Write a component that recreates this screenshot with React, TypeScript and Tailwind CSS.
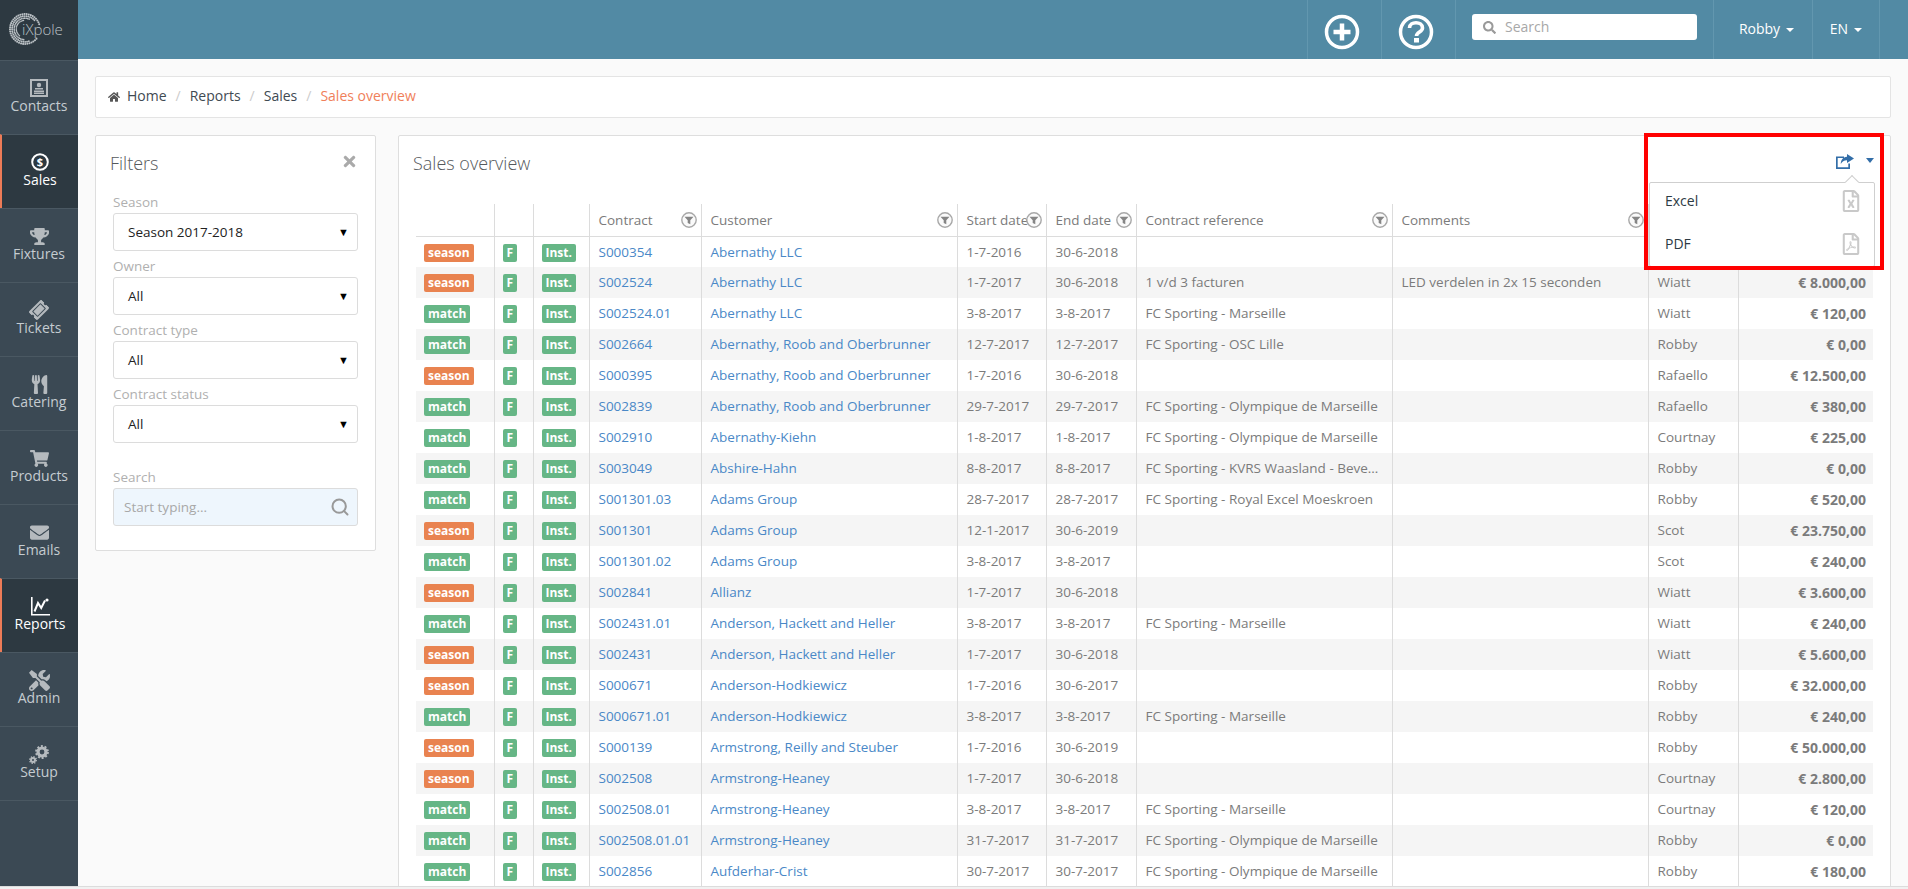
import React from 'react';
import { FaEnvelope, FaHome, FaRegFileExcel, FaRegFilePdf, FaSearch, FaShoppingCart, FaTicketAlt, FaTimes, FaTools, FaTrophy, FaUtensils } from 'react-icons/fa';
import { Search } from 'lucide-react';

type Row = {
  type: 'season' | 'match';
  contract: string;
  customer: string;
  start: string;
  end: string;
  reference?: string;
  comments?: string;
  owner: string;
  amount: string;
};

const rows: Row[] = [
  { type: 'season', contract: 'S000354', customer: 'Abernathy LLC', start: '1-7-2016', end: '30-6-2018', owner: '', amount: '' },
  { type: 'season', contract: 'S002524', customer: 'Abernathy LLC', start: '1-7-2017', end: '30-6-2018', reference: '1 v/d 3 facturen', comments: 'LED verdelen in 2x 15 seconden', owner: 'Wiatt', amount: '€ 8.000,00' },
  { type: 'match', contract: 'S002524.01', customer: 'Abernathy LLC', start: '3-8-2017', end: '3-8-2017', reference: 'FC Sporting - Marseille', owner: 'Wiatt', amount: '€ 120,00' },
  { type: 'match', contract: 'S002664', customer: 'Abernathy, Roob and Oberbrunner', start: '12-7-2017', end: '12-7-2017', reference: 'FC Sporting - OSC Lille', owner: 'Robby', amount: '€ 0,00' },
  { type: 'season', contract: 'S000395', customer: 'Abernathy, Roob and Oberbrunner', start: '1-7-2016', end: '30-6-2018', owner: 'Rafaello', amount: '€ 12.500,00' },
  { type: 'match', contract: 'S002839', customer: 'Abernathy, Roob and Oberbrunner', start: '29-7-2017', end: '29-7-2017', reference: 'FC Sporting - Olympique de Marseille', owner: 'Rafaello', amount: '€ 380,00' },
  { type: 'match', contract: 'S002910', customer: 'Abernathy-Kiehn', start: '1-8-2017', end: '1-8-2017', reference: 'FC Sporting - Olympique de Marseille', owner: 'Courtnay', amount: '€ 225,00' },
  { type: 'match', contract: 'S003049', customer: 'Abshire-Hahn', start: '8-8-2017', end: '8-8-2017', reference: 'FC Sporting - KVRS Waasland - Bever...', owner: 'Robby', amount: '€ 0,00' },
  { type: 'match', contract: 'S001301.03', customer: 'Adams Group', start: '28-7-2017', end: '28-7-2017', reference: 'FC Sporting - Royal Excel Moeskroen', owner: 'Robby', amount: '€ 520,00' },
  { type: 'season', contract: 'S001301', customer: 'Adams Group', start: '12-1-2017', end: '30-6-2019', owner: 'Scot', amount: '€ 23.750,00' },
  { type: 'match', contract: 'S001301.02', customer: 'Adams Group', start: '3-8-2017', end: '3-8-2017', owner: 'Scot', amount: '€ 240,00' },
  { type: 'season', contract: 'S002841', customer: 'Allianz', start: '1-7-2017', end: '30-6-2018', owner: 'Wiatt', amount: '€ 3.600,00' },
  { type: 'match', contract: 'S002431.01', customer: 'Anderson, Hackett and Heller', start: '3-8-2017', end: '3-8-2017', reference: 'FC Sporting - Marseille', owner: 'Wiatt', amount: '€ 240,00' },
  { type: 'season', contract: 'S002431', customer: 'Anderson, Hackett and Heller', start: '1-7-2017', end: '30-6-2018', owner: 'Wiatt', amount: '€ 5.600,00' },
  { type: 'season', contract: 'S000671', customer: 'Anderson-Hodkiewicz', start: '1-7-2016', end: '30-6-2017', owner: 'Robby', amount: '€ 32.000,00' },
  { type: 'match', contract: 'S000671.01', customer: 'Anderson-Hodkiewicz', start: '3-8-2017', end: '3-8-2017', reference: 'FC Sporting - Marseille', owner: 'Robby', amount: '€ 240,00' },
  { type: 'season', contract: 'S000139', customer: 'Armstrong, Reilly and Steuber', start: '1-7-2016', end: '30-6-2019', owner: 'Robby', amount: '€ 50.000,00' },
  { type: 'season', contract: 'S002508', customer: 'Armstrong-Heaney', start: '1-7-2017', end: '30-6-2018', owner: 'Courtnay', amount: '€ 2.800,00' },
  { type: 'match', contract: 'S002508.01', customer: 'Armstrong-Heaney', start: '3-8-2017', end: '3-8-2017', reference: 'FC Sporting - Marseille', owner: 'Courtnay', amount: '€ 120,00' },
  { type: 'match', contract: 'S002508.01.01', customer: 'Armstrong-Heaney', start: '31-7-2017', end: '31-7-2017', reference: 'FC Sporting - Olympique de Marseille', owner: 'Robby', amount: '€ 0,00' },
  { type: 'match', contract: 'S002856', customer: 'Aufderhar-Crist', start: '30-7-2017', end: '30-7-2017', reference: 'FC Sporting - Olympique de Marseille', owner: 'Robby', amount: '€ 180,00' },
];

const ContactsIcon = () => (
  <svg width="18" height="18" viewBox="0 0 18 18" fill="currentColor">
    <path fillRule="evenodd" d="M0 0h18v18H0zM2 2v14h14V2z" />
    <circle cx="9" cy="6" r="2.200" />
    <path d="M5 9h8v1.600H5zM4 11.400h10V13H4zM4 13.600h10V15H4z" />
  </svg>
);

const SalesIcon = () => (
  <svg width="18" height="18" viewBox="0 0 18 18" fill="none" stroke="currentColor">
    <circle cx="9" cy="9" r="7.800" strokeWidth="2" />
    <text x="9" y="13" textAnchor="middle" fontSize="11" fontWeight="700" fill="currentColor" stroke="none" fontFamily="'Open Sans', sans-serif">$</text>
  </svg>
);

const ChartIcon = () => (
  <svg width="19" height="19" viewBox="0 0 19 19" fill="currentColor">
    <path d="M0 0h1.600v17H19v1.600H0z" />
    <path d="M3.500 14.500 7 6l3.200 5L14 3.500" fill="none" stroke="currentColor" strokeWidth="2" />
    <circle cx="16" cy="3" r="1.600" />
  </svg>
);

// small gear lower left, big gear upper right
const SetupIcon = () => (
  <svg width="20" height="19" viewBox="0 0 20 19" fill="none" stroke="currentColor">
    <circle cx="13" cy="7" r="4" strokeWidth="3.200" />
    <circle cx="13" cy="7" r="6" strokeWidth="1.800" strokeDasharray="2 1.770" />
    <circle cx="4" cy="15" r="2" strokeWidth="2" />
    <circle cx="4" cy="15" r="3.300" strokeWidth="1.400" strokeDasharray="1.300 1.290" />
  </svg>
);

const navItems = [
  { label: 'Contacts', icon: <ContactsIcon /> },
  { label: 'Sales', icon: <SalesIcon />, active: true },
  { label: 'Fixtures', icon: <FaTrophy size={19} /> },
  { label: 'Tickets', icon: <FaTicketAlt size={18} className="-rotate-45" /> },
  { label: 'Catering', icon: <FaUtensils size={19} /> },
  { label: 'Products', icon: <FaShoppingCart size={19} /> },
  { label: 'Emails', icon: <FaEnvelope size={19} /> },
  { label: 'Reports', icon: <ChartIcon />, active: true },
  { label: 'Admin', icon: <FaTools size={21} /> },
  { label: 'Setup', icon: <SetupIcon /> },
];

const Logo = () => {
  const dots = [];
  for (let ring = 0; ring < 4; ring++) {
    for (let i = 0; i < 38; i++) {
      const a = (i / 38) * Math.PI * 1.72 + 0.7;
      const r = 15 - ring * 2.1;
      // band gets thinner towards both ends of the arc
      const edge = Math.sin((i / 38) * Math.PI);
      if (ring > edge * 4) continue;
      dots.push(
        <circle key={`${ring}-${i}`} cx={16 + Math.cos(a) * r} cy={16 + Math.sin(a) * r} r={1.05 - ring * 0.1} fill="#bcc2c6" />,
      );
    }
  }
  return (
    <svg width="58" height="34" viewBox="0 0 58 34" className="-ml-[2px]">
      {dots}
      <text x="13" y="22" fontSize="15" fill="#bcc2c6" fontFamily="'Open Sans', sans-serif" fontWeight="300">iXpole</text>
    </svg>
  );
};

const FilterIcon = () => (
  <svg width="16" height="16" viewBox="0 0 16 16" className="-ml-[6px] shrink-0">
    <circle cx="8" cy="8" r="7.200" fill="#fafafa" stroke="#a8a8a8" strokeWidth="1.400" />
    <path d="M3.500 4.800h9L9.300 8.300V12.300L6.700 11V8.300z" fill="#858585" />
  </svg>
);

const Badge = ({ color, children }: { color: string; children: React.ReactNode }) => (
  <span className={`inline-flex h-[18px] items-center justify-center rounded-[2px] px-[4px] text-[12px] font-bold leading-none text-white ${color}`}>
    {children}
  </span>
);

const FilterSelect = ({ label, value }: { label: string; value: string }) => (
  <div className="mb-[5px]">
    <div className="mb-[1px] h-[20px] text-[13.5px] leading-[20px] text-[#b0b0b0]">{label}</div>
    <div className="flex h-[38px] items-center justify-between rounded-[3px] border border-[#dcdcdc] bg-white pl-[14px] pr-[8px] text-[13.5px] text-[#222]">
      {value}
      <span className="text-[11px] text-black">▼</span>
    </div>
  </div>
);

const HeaderCell = ({ label, filter = true }: { label?: string; filter?: boolean }) => (
  <th className="h-[32px] border-l border-[#dcdcdc] pl-[9px] pr-[4px] text-left font-normal first:border-l-0">
    <div className="flex items-center justify-between whitespace-nowrap text-[13.5px] text-[#7b7b7b]">
      {label}
      {filter && label && <FilterIcon />}
    </div>
  </th>
);

export default function App() {
  return (
    <div className="relative flex h-[889px] flex-col overflow-hidden bg-[#f1f1f1] font-['Open_Sans',sans-serif] text-[14px]">
      <div className="flex h-[886px] shrink-0 overflow-hidden bg-[#fafafa]">
        <aside className="flex w-[78px] shrink-0 flex-col bg-[#3b4954]">
          <div className="flex h-[60px] shrink-0 items-center justify-center bg-[#2d3941]">
            <Logo />
          </div>
          {navItems.map((item) => (
            <div
              key={item.label}
              className={`flex h-[74px] shrink-0 flex-col items-center border-t border-[#4a5862] pt-[17px] text-[14px] leading-[20px] ${
                item.active ? 'border-l-2 border-l-[#ed7b57] bg-[#2d3941] text-white' : 'text-[#c5ccd1]'
              }`}
            >
              <div className={`flex h-[20px] items-center ${item.active ? 'text-white' : 'text-[#b5babe]'}`}>{item.icon}</div>
              <span className="-mt-[2px]">{item.label}</span>
            </div>
          ))}
          <div className="h-0 border-t border-[#4a5862]" />
        </aside>

        <div className="flex min-w-0 flex-1 flex-col">
          <header className="flex h-[59px] shrink-0 items-stretch justify-end bg-[#528aa4] pr-[28px] text-white">
            <div className="flex w-[74px] items-center justify-center border-l border-[#6297af] pr-[5px] pt-[5px]">
              <svg width="36" height="36" viewBox="0 0 36 36" fill="none" stroke="white">
                <circle cx="18" cy="18" r="15.500" strokeWidth="3.500" />
                <path d="M18 9.500v17M9.500 18h17" strokeWidth="4.500" />
              </svg>
            </div>
            <div className="flex w-[74px] items-center justify-center border-l border-[#6297af] pr-[6px] pt-[5px]">
              <svg width="36" height="36" viewBox="0 0 36 36" fill="none" stroke="white">
                <circle cx="18" cy="18" r="15.500" strokeWidth="3.500" />
                <path d="M11.500 14c0-7 13-7 13 0 0 4-6 4-6 8" strokeWidth="3.600" />
                <path d="M16 24h5v4.500h-5z" fill="white" stroke="none" />
              </svg>
            </div>
            <div className="flex w-[258px] items-start border-l border-[#6297af] pl-[16px] pt-[14px]">
              <div className="flex h-[26px] w-[225px] items-center gap-[9px] rounded-[3px] bg-white pl-[11px] text-[14px] text-[#a8a8a8]">
                <FaSearch size={13} className="text-[#9a9a9a]" />
                <span className="-mt-[2px]">Search</span>
              </div>
            </div>
            <div className="flex w-[99px] items-center justify-center gap-[6px] border-l border-[#6297af] pb-[3px] pl-[7px] text-[14px]">
              Robby
              <span className="mt-[3px] h-0 w-0 border-x-[4px] border-t-[4px] border-x-transparent border-t-white" />
            </div>
            <div className="flex w-[68px] items-center justify-center gap-[6px] border-x border-[#6297af] pb-[3px] text-[14px]">
              EN
              <span className="mt-[3px] h-0 w-0 border-x-[4px] border-t-[4px] border-x-transparent border-t-white" />
            </div>
          </header>

          <main className="flex min-h-0 flex-1 flex-col px-[17px] pt-[17px]">
            <nav className="flex h-[42px] shrink-0 items-center gap-[9px] rounded-[2px] border border-[#e4e4e4] bg-white pb-[3px] pl-[12px] text-[14px] text-[#3f4a52]">
              <FaHome size={12} className="mt-[3px] text-[#555]" />
              <span className="-ml-[2px]">Home</span>
              <span className="text-[#ccc]">/</span>
              <span>Reports</span>
              <span className="text-[#ccc]">/</span>
              <span>Sales</span>
              <span className="text-[#ccc]">/</span>
              <span className="text-[#f0805a]">Sales overview</span>
            </nav>

            <div className="mt-[17px] flex min-h-0 flex-1 items-start gap-[22px]">
              <section className="h-[416px] w-[281px] shrink-0 rounded-[2px] border border-[#dedede] bg-white px-[17px] pt-[11px]">
                <div className="mb-[13px] flex items-center justify-between">
                  <h2 className="-ml-[3px] text-[18px] font-light leading-[32px] text-[#55595c]">Filters</h2>
                  <FaTimes size={17} className="-mt-[4px] text-[#aaa]" />
                </div>
                <FilterSelect label="Season" value="Season 2017-2018" />
                <FilterSelect label="Owner" value="All" />
                <FilterSelect label="Contract type" value="All" />
                <FilterSelect label="Contract status" value="All" />
                <div className="mb-[1px] mt-[24px] h-[20px] text-[13.5px] leading-[20px] text-[#b0b0b0]">Search</div>
                <div className="flex h-[38px] items-center justify-between rounded-[3px] border border-[#dcdcdc] bg-[#eef6fd] px-[10px] text-[13.5px] text-[#a8a8a8]">
                  Start typing...
                  <Search size={20} strokeWidth={2.4} className="-mr-[3px] text-[#999]" />
                </div>
              </section>

              <section className="relative h-[760px] min-w-0 flex-1 rounded-[2px] border border-[#dedede] bg-white pl-[17px] pr-[16px]">
                <div className="flex h-[68px] items-start justify-between">
                  <h1 className="-ml-[3px] pt-[11px] text-[18px] font-light leading-[32px] text-[#55595c]">Sales overview</h1>
                  <div className="relative mt-[18px] flex items-center gap-[12px] text-[#336ea8]">
                    <svg width="18" height="15" viewBox="0 0 18 15" fill="currentColor">
                      <path d="M0 2.500h8v1.500H1.700v9.300h10.600V9.500H14V15H0z" />
                      <path d="M11 0l7 4.500L11 9V6.200C8 6.200 6 7.500 4.800 10 4.800 6 7 3 11 2.800z" />
                    </svg>
                    <span className="mb-[3px] h-0 w-0 border-x-[4.500px] border-t-[5px] border-x-transparent border-t-[#336ea8]" />
                  </div>
                </div>

                <table className="w-[1457px] table-fixed border-collapse text-[13.5px] text-[#7b7b7b]">
                  <colgroup>
                    <col className="w-[78px]" />
                    <col className="w-[39px]" />
                    <col className="w-[56px]" />
                    <col className="w-[112px]" />
                    <col className="w-[256px]" />
                    <col className="w-[89px]" />
                    <col className="w-[90px]" />
                    <col className="w-[256px]" />
                    <col className="w-[256px]" />
                    <col className="w-[90px]" />
                    <col className="w-[135px]" />
                  </colgroup>
                  <thead>
                    <tr className="border-b border-[#dcdcdc]">
                      <HeaderCell />
                      <HeaderCell />
                      <HeaderCell />
                      <HeaderCell label="Contract" />
                      <HeaderCell label="Customer" />
                      <HeaderCell label="Start date" />
                      <HeaderCell label="End date" />
                      <HeaderCell label="Contract reference" />
                      <HeaderCell label="Comments" />
                      <HeaderCell />
                      <HeaderCell />
                    </tr>
                  </thead>
                  <tbody>
                    {rows.map((row) => (
                      <tr key={row.contract} className="h-[31px] even:bg-[#f5f5f5]">
                        <td className="whitespace-nowrap pl-[8px]">
                          <Badge color={row.type === 'season' ? 'bg-[#e98350]' : 'bg-[#66b686]'}>{row.type}</Badge>
                        </td>
                        <td className="border-l border-[#dcdcdc] pl-[8px]">
                          <Badge color="bg-[#66b686]">F</Badge>
                        </td>
                        <td className="border-l border-[#dcdcdc] pl-[8px]">
                          <Badge color="bg-[#66b686]">Inst.</Badge>
                        </td>
                        <td className="border-l border-[#dcdcdc] pl-[9px] pr-[8px] text-[#4a88c7]">{row.contract}</td>
                        <td className="border-l border-[#dcdcdc] pl-[9px] pr-[8px] text-[#4a88c7]">{row.customer}</td>
                        <td className="border-l border-[#dcdcdc] pl-[9px] pr-[8px]">{row.start}</td>
                        <td className="border-l border-[#dcdcdc] pl-[9px] pr-[8px]">{row.end}</td>
                        <td className="truncate border-l border-[#dcdcdc] pl-[9px] pr-[8px]">{row.reference}</td>
                        <td className="truncate border-l border-[#dcdcdc] pl-[9px] pr-[8px]">{row.comments}</td>
                        <td className="border-l border-[#dcdcdc] pl-[9px] pr-[8px]">{row.owner}</td>
                        <td className="border-l border-[#dcdcdc] pl-[8px] pr-[7px] text-right text-[14px] font-bold">{row.amount}</td>
                      </tr>
                    ))}
                  </tbody>
                </table>

                <div className="absolute right-[15px] top-[46px] h-[85px] w-[226px] rounded-[2px] border border-[#cfcfcf] bg-white px-[15px] text-[14px] text-[#2d3a44]">
                  <span className="absolute -top-[6px] right-[17px] h-[10px] w-[10px] rotate-45 border-l border-t border-[#cfcfcf] bg-white" />
                  <div className="-mt-[4px]">
                    <div className="flex h-[43px] items-center justify-between">
                      Excel
                      <FaRegFileExcel size={22} className="-mr-[3px] mt-[1px] text-[#c9c9c9]" />
                    </div>
                    <div className="flex h-[43px] items-center justify-between">
                      PDF
                      <FaRegFilePdf size={22} className="-mr-[3px] mt-[1px] text-[#c9c9c9]" />
                    </div>
                  </div>
                </div>
              </section>
            </div>
          </main>
        </div>
      </div>
      <div className="h-0 border-t border-[#dcdcdc]" />

      {/* annotation drawn over the export menu */}
      <div className="pointer-events-none absolute left-[1644px] top-[133px] h-[137px] w-[240px] border-4 border-[#ff0000]" />
    </div>
  );
}
